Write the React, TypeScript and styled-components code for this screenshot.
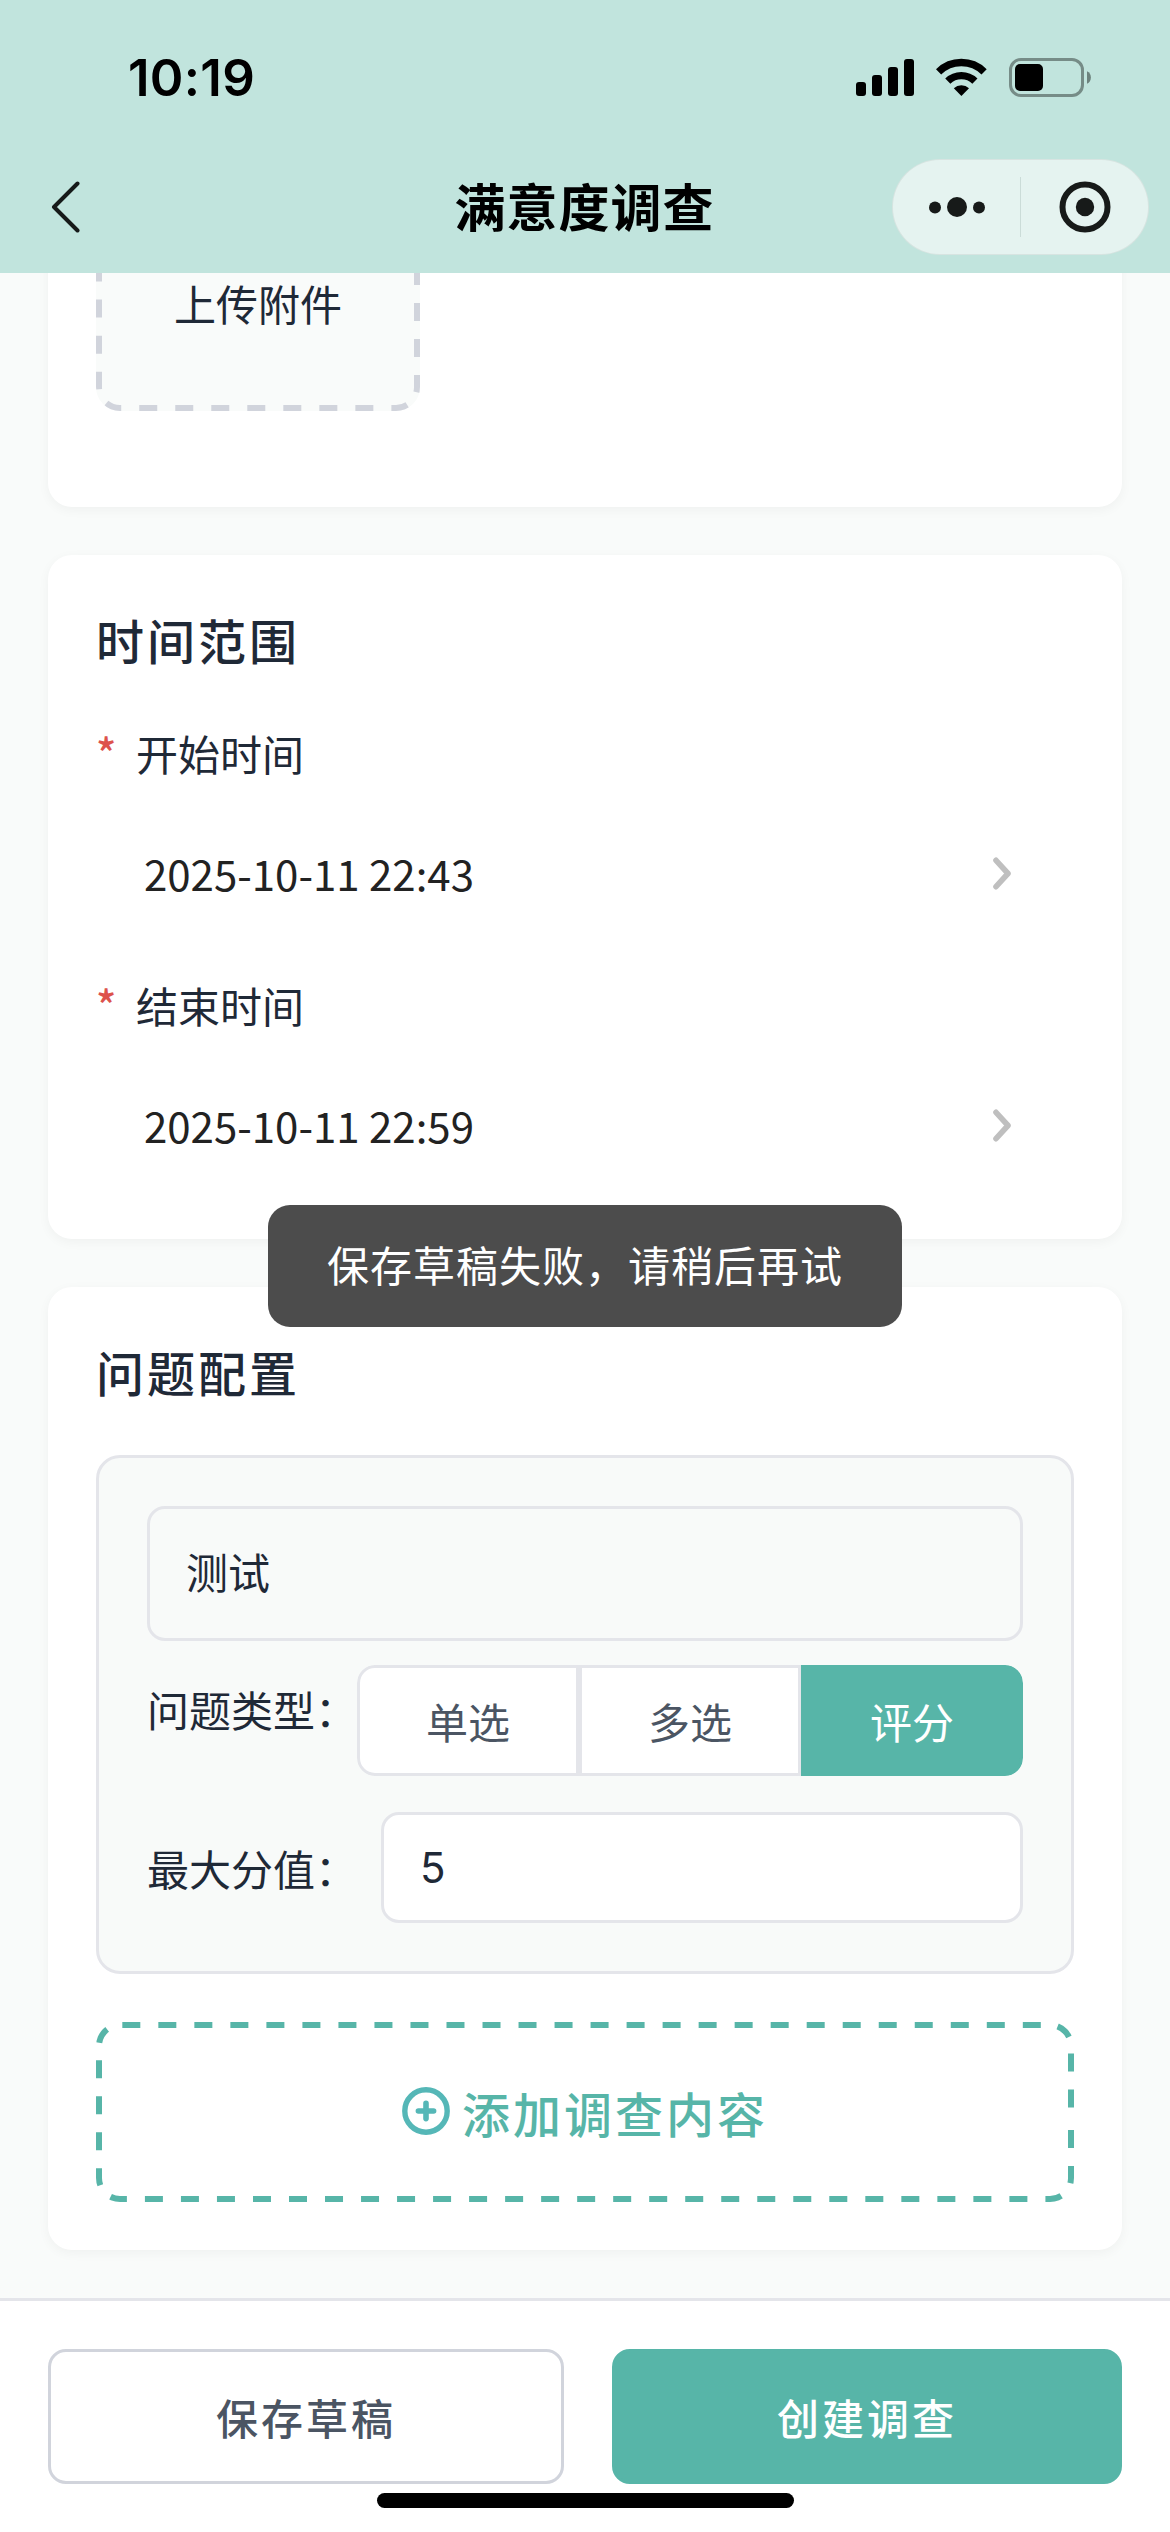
import React from 'react';
import styled, { createGlobalStyle, css } from 'styled-components';

const color = {
  header: '#c1e4dd',
  page: '#f9fbfa',
  panel: '#f8faf9',
  line: '#e4e5ea',
  lineStrong: '#d1d4dc',
  ink: '#1f2937',
  inkSoft: '#4b5563',
  teal: '#57b5a8',
  danger: '#dd524c',
};

const GlobalStyle = createGlobalStyle`
  *, *::before, *::after { box-sizing: border-box; }
  body { margin: 0; background: #fff; }
  button, input { font: inherit; color: inherit; margin: 0; outline: none; }
`;

const Screen = styled.div`
  position: relative;
  display: flex;
  flex-direction: column;
  width: 1170px;
  height: 2532px;
  overflow: hidden;
  background: ${color.page};
  color: ${color.ink};
  font-family: 'Noto Sans CJK SC', sans-serif;
  font-size: 42px;
  line-height: 60px;
`;

const Header = styled.header`
  flex: none;
  height: 273px;
  background: ${color.header};
`;

const StatusBar = styled.div`
  display: flex;
  align-items: center;
  justify-content: space-between;
  height: 141px;
  padding: 15px 78px 0 128px;
`;

const Clock = styled.span`
  font-family: Inter, sans-serif;
  font-size: 51px;
  font-weight: 600;
  letter-spacing: 0.3px;
  color: #000;
`;

const NavBar = styled.div`
  display: grid;
  grid-template-columns: 257px 1fr 257px;
  align-items: center;
  height: 132px;
  padding: 0 21px 0 51px;
`;

const NavTitle = styled.h1`
  margin: 0;
  padding: 0 31px 4px 0;
  text-align: center;
  font-size: 51px;
  font-weight: 700;
  line-height: 72px;
  letter-spacing: 1px;
  color: #000;
`;

const BackButton = styled.button`
  display: flex;
  justify-self: start;
  padding: 0;
  border: 0;
  background: none;
`;

const Capsule = styled.div`
  display: flex;
  align-items: center;
  width: 257px;
  height: 96px;
  border: 1px solid rgba(0, 0, 0, 0.06);
  border-radius: 48px;
  background: #e5f3f0;
`;

const CapsuleHalf = styled.div`
  flex: 1;
  display: flex;
  align-items: center;
  justify-content: center;
`;

const CapsuleRule = styled.div`
  width: 1px;
  height: 60px;
  background: #cbdcd8;
`;

const Content = styled.main`
  flex: none;
  display: flex;
  flex-direction: column;
  justify-content: flex-end;
  gap: 48px;
  height: 2025px;
  padding: 0 48px 48px;
  overflow: hidden;
`;

const Card = styled.section<{ $bottom?: number }>`
  flex: none;
  padding: 48px 48px ${(p) => p.$bottom ?? 48}px;
  border-radius: 24px;
  background: #fff;
  box-shadow: 0 3px 12px rgba(0, 0, 0, 0.045);
`;

const SectionTitle = styled.h2`
  margin: 0;
  font-size: 48px;
  font-weight: 500;
  line-height: 72px;
  letter-spacing: 3px;
`;

const DashFrame = styled.div`
  position: relative;
  border-radius: 24px;
`;

const DashOutline = styled.svg`
  position: absolute;
  inset: 0;
  border-radius: 24px;
  overflow: hidden;
`;

const UploadBox = styled(DashFrame)`
  display: flex;
  align-items: flex-end;
  justify-content: center;
  width: 324px;
  height: 324px;
  padding-bottom: 78px;
  background: ${color.page};
`;

const Fields = styled.div`
  padding-top: 12px;
`;

const Field = styled.div`
  padding-top: 36px;
`;

const FieldLabel = styled.div`
  display: flex;
  height: 60px;
`;

const Required = styled.span`
  width: 40px;
  margin-top: -1px;
  color: ${color.danger};
  font-weight: 500;
`;

const PickerRow = styled.div`
  display: flex;
  align-items: center;
  justify-content: space-between;
  height: 132px;
  margin-top: 24px;
  padding: 0 63px 0 48px;
  color: #222;
`;

const QuestionPanel = styled.div`
  margin: 48px 0;
  padding: 48px;
  border: 3px solid ${color.line};
  border-radius: 24px;
  background: ${color.panel};
`;

const TextInput = styled.input<{ $tall?: boolean }>`
  flex: 1;
  display: block;
  width: 100%;
  min-width: 0;
  height: ${(p) => (p.$tall ? 135 : 111)}px;
  padding: 0 36px ${(p) => (p.$tall ? 6 : 0)}px;
  border: 3px solid ${color.line};
  border-radius: 18px;
  background: ${(p) => (p.$tall ? 'transparent' : '#fff')};
  ${(p) => !p.$tall && css`font-family: Inter, sans-serif;`}
`;

const OptionRow = styled.div<{ $top: number; $align: string; $gap?: number }>`
  display: flex;
  align-items: ${(p) => p.$align};
  gap: ${(p) => p.$gap ?? 0}px;
  margin-top: ${(p) => p.$top}px;
`;

const OptionLabel = styled.span<{ $drop?: number }>`
  width: 210px;
  flex: none;
  padding-top: ${(p) => p.$drop ?? 0}px;
  white-space: nowrap;
`;

const Segments = styled.div`
  flex: 1;
  display: flex;
  height: 111px;
  border-radius: 18px;
  overflow: hidden;
`;

const Segment = styled.button<{ $active?: boolean }>`
  flex: 1;
  padding: 0;
  border: 3px solid ${(p) => (p.$active ? color.teal : color.line)};
  background: ${(p) => (p.$active ? color.teal : '#fff')};
  color: ${(p) => (p.$active ? '#fff' : color.inkSoft)};
  &:first-child { border-radius: 18px 0 0 18px; }
  &:last-child { border-radius: 0 18px 18px 0; }
`;

const AddButton = styled(DashFrame)`
  display: flex;
  align-items: center;
  justify-content: center;
  gap: 12px;
  height: 180px;
  color: ${color.teal};
  font-size: 48px;
  font-weight: 500;
  letter-spacing: 3px;
`;

const Footer = styled.footer`
  flex: 1;
  display: flex;
  align-items: flex-start;
  gap: 48px;
  padding: 48px 48px 0;
  border-top: 3px solid ${color.line};
  background: #fff;
`;

const ActionButton = styled.button<{ $primary?: boolean }>`
  width: ${(p) => (p.$primary ? 510 : 516)}px;
  height: 135px;
  padding: 0;
  border: 3px solid ${(p) => (p.$primary ? color.teal : color.lineStrong)};
  border-radius: 18px;
  background: ${(p) => (p.$primary ? color.teal : '#fff')};
  color: ${(p) => (p.$primary ? '#fff' : color.inkSoft)};
  font-weight: 500;
  letter-spacing: 3px;
`;

const Toast = styled.div`
  position: absolute;
  left: 268px;
  top: 1205px;
  display: flex;
  align-items: center;
  justify-content: center;
  width: 634px;
  height: 122px;
  padding-bottom: 5px;
  border-radius: 22px;
  background: #4c4c4c;
  color: #fff;
  letter-spacing: 1px;
  white-space: nowrap;
`;

const HomeIndicator = styled.div`
  position: absolute;
  left: 377px;
  bottom: 24px;
  width: 417px;
  height: 15px;
  border-radius: 8px;
  background: #000;
`;

// Dashes run clockwise along the outer edge, starting from the middle of the right side.
function Dashes({ w, h, stroke }: { w: number; h: number; stroke: string }) {
  const r = 24;
  const d = `M${w} ${h / 2}V${h - r}A${r} ${r} 0 0 1 ${w - r} ${h}H${r}A${r} ${r} 0 0 1 0 ${h - r}V${r}A${r} ${r} 0 0 1 ${r} 0H${w - r}A${r} ${r} 0 0 1 ${w} ${r}V${h / 2}`;
  return (
    <DashOutline width={w} height={h} viewBox={`0 0 ${w} ${h}`} fill="none">
      <path d={d} stroke={stroke} strokeWidth="12" strokeDasharray="18 18.02" strokeDashoffset="18.02" />
    </DashOutline>
  );
}

function StatusIcons() {
  return (
    <svg width="236" height="40" viewBox="856 58 236 40">
      <rect x="856" y="82" width="10" height="14" rx="3" />
      <rect x="872" y="75" width="10" height="21" rx="3" />
      <rect x="888" y="67" width="10" height="29" rx="3" />
      <rect x="904" y="59" width="10" height="37" rx="3" />
      <g fill="none" stroke="#000" strokeWidth="7.4">
        <path d="M938.6 71.8A32.5 32.5 0 0 1 984.1 71.8" />
        <path d="M947.8 81.1A19.5 19.5 0 0 1 974.9 81.1" />
      </g>
      <path d="M961.4 96L953.8 88.2A11 11 0 0 1 969 88.2Z" />
      <rect x="1010.5" y="59.5" width="72" height="36" rx="10.5" fill="none" stroke="#768c87" strokeWidth="3" />
      <rect x="1015" y="64" width="28" height="27" rx="5" />
      <path d="M1087 71.3C1092.2 73 1092.2 82 1087 83.7Z" fill="#6d827d" />
    </svg>
  );
}

function Chevron() {
  return (
    <svg width="18" height="33" viewBox="0 0 18 33" fill="none" stroke="#bfbfbf" strokeWidth="5.6" strokeLinecap="round" strokeLinejoin="round">
      <path d="M3 3.3L15 16.5L3 29.7" />
    </svg>
  );
}

function PlusCircle() {
  return (
    <svg width="48" height="48" viewBox="0 0 48 48" fill="none" stroke="#55b7b7" strokeLinecap="round">
      <circle cx="24" cy="24" r="21.2" strokeWidth="5.4" />
      <path d="M16.4 24H31.6M24 16.4V31.6" strokeWidth="5.6" />
    </svg>
  );
}

const IconLift = styled.span`
  display: flex;
  padding-bottom: 3px;
`;

function TimeField({ label, value }: { label: string; value: string }) {
  return (
    <Field>
      <FieldLabel>
        <Required>*</Required>
        {label}
      </FieldLabel>
      <PickerRow>
        <span>{value}</span>
        <Chevron />
      </PickerRow>
    </Field>
  );
}

export default function App() {
  return (
    <Screen>
      <GlobalStyle />
      <Header>
        <StatusBar>
          <Clock>10:19</Clock>
          <StatusIcons />
        </StatusBar>
        <NavBar>
          <BackButton aria-label="返回">
            <svg width="30" height="52" viewBox="0 0 30 52" fill="none" stroke="#161a19" strokeWidth="4" strokeLinecap="round" strokeLinejoin="round">
              <path d="M26.5 2.5L3 26L26.5 49.5" />
            </svg>
          </BackButton>
          <NavTitle>满意度调查</NavTitle>
          <Capsule>
            <CapsuleHalf>
              <svg width="56" height="20" viewBox="0 0 56 20" fill="#171a19">
                <circle cx="6" cy="10.5" r="6" />
                <circle cx="28" cy="10" r="10" />
                <circle cx="50" cy="10.5" r="6" />
              </svg>
            </CapsuleHalf>
            <CapsuleRule />
            <CapsuleHalf>
              <svg width="52" height="52" viewBox="0 0 52 52" fill="#171a19">
                <circle cx="26" cy="26" r="22.5" fill="none" stroke="#171a19" strokeWidth="6" />
                <circle cx="26" cy="26" r="9.2" />
              </svg>
            </CapsuleHalf>
          </Capsule>
        </NavBar>
      </Header>

      <Content>
        <Card $bottom={96}>
          <UploadBox>
            <Dashes w={324} h={324} stroke={color.lineStrong} />
            <span>上传附件</span>
          </UploadBox>
        </Card>

        <Card>
          <SectionTitle>时间范围</SectionTitle>
          <Fields>
            <TimeField label="开始时间" value="2025-10-11 22:43" />
            <TimeField label="结束时间" value="2025-10-11 22:59" />
          </Fields>
        </Card>

        <Card>
          <SectionTitle>问题配置</SectionTitle>
          <QuestionPanel>
            <TextInput $tall defaultValue="测试" />
            <OptionRow $top={24} $align="flex-start">
              <OptionLabel $drop={14}>问题类型：</OptionLabel>
              <Segments>
                <Segment>单选</Segment>
                <Segment>多选</Segment>
                <Segment $active>评分</Segment>
              </Segments>
            </OptionRow>
            <OptionRow $top={36} $align="center" $gap={24}>
              <OptionLabel>最大分值：</OptionLabel>
              <TextInput defaultValue="5" />
            </OptionRow>
          </QuestionPanel>
          <AddButton>
            <Dashes w={978} h={180} stroke={color.teal} />
            <IconLift>
              <PlusCircle />
            </IconLift>
            <span>添加调查内容</span>
          </AddButton>
        </Card>
      </Content>

      <Footer>
        <ActionButton>保存草稿</ActionButton>
        <ActionButton $primary>创建调查</ActionButton>
      </Footer>

      <Toast>保存草稿失败，请稍后再试</Toast>
      <HomeIndicator />
    </Screen>
  );
}
